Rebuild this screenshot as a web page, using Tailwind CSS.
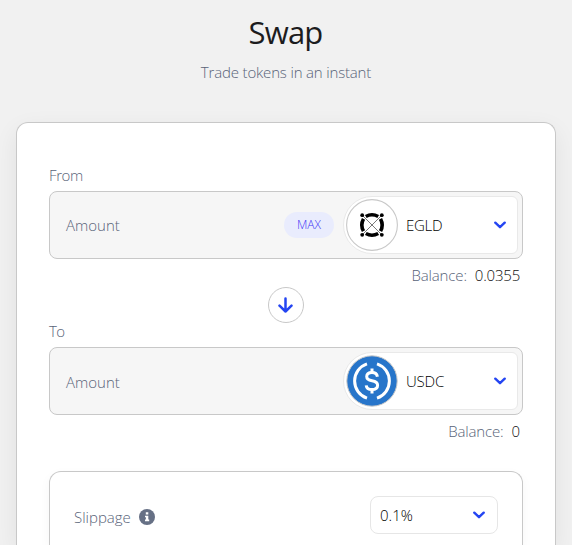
<!DOCTYPE html>
<html lang="en">
<head>
<meta charset="utf-8">
<title>Swap</title>
<script src="https://cdn.jsdelivr.net/npm/@tailwindcss/browser@4"></script>
</head>
<body>
<div class="h-[545px] overflow-hidden bg-[#f1f1f1] font-['Open_Sans','Noto_Sans',sans-serif] font-light text-[15px] leading-5 text-[#586378]">
<header class="flex h-[122px] flex-col items-center pt-3">
  <h1 class="pr-px text-[31px] leading-10 font-normal tracking-[-0.8px] text-[#1c1c1e]">Swap</h1>
  <p class="mt-2.5 tracking-[-0.17px]">Trade tokens in an instant</p>
</header>
<main class="mx-4 h-[423px] rounded-t-xl border border-b-0 border-[#c8c8c8] bg-white px-8 pt-[42px] shadow-[0_8px_24px_rgba(0,0,0,0.07)]">
  <div class="w-[474px]">
    <label class="block h-[26px] tracking-[-0.4px]">From</label>
    <div class="flex h-[68px] items-center rounded-lg border border-[#c8c8c8] bg-[#f6f6f6] pl-4 pr-1">
      <span class="flex-1 tracking-[0]">Amount</span>
      <button class="mr-[9px] h-[26px] w-[50px] rounded-full bg-[#e9ecfd] text-xs text-[#3f35f5]">MAX</button>
      <div class="flex h-[58px] w-[175px] items-center rounded-l-[29px] rounded-r-[6px] border border-[#e9e9e9] bg-white pl-0.5 pr-[11px] text-black">
        <svg class="size-[52px] shrink-0" viewBox="0 0 52 52" fill="none">
          <circle cx="26" cy="26" r="25.4" fill="#fff" stroke="#c8c8c8" stroke-width="1.1"/>
          <path d="M16 16 36 36M36 16 16 36" stroke="#555" stroke-width=".8"/>
          <g stroke="#000" stroke-width="3.6">
            <path d="M19.8 17.5Q26 14.1 32.2 17.5M34.5 19.8Q37.9 26 34.5 32.2M32.2 34.5Q26 37.9 19.8 34.5M17.5 32.2Q14.1 26 17.5 19.8"/>
          </g>
          <g fill="#000"><circle cx="16.2" cy="16.2" r="1.9"/><circle cx="35.8" cy="16.2" r="1.9"/><circle cx="16.2" cy="35.8" r="1.9"/><circle cx="35.8" cy="35.8" r="1.9"/></g>
        </svg>
        <span class="ml-2 flex-1 tracking-[-0.3px]">EGLD</span>
        <svg class="h-2 w-3" viewBox="0 0 12 8" fill="none" stroke="#2445f2" stroke-width="2.4" stroke-linecap="round" stroke-linejoin="round"><path d="m1.3 1.7 4.7 4.5 4.7-4.5"/></svg>
      </div>
    </div>
    <div class="mt-1.5 flex h-5 justify-end gap-2 pr-[3px]"><span class="tracking-[-0.15px]">Balance:</span><span class="tracking-[-0.2px] text-[#111]">0.0355</span></div>
    <div class="mt-0.5 flex h-9 justify-center">
      <button class="flex size-9 items-center justify-center rounded-full border border-[#c8c8c8] bg-white">
        <svg class="size-4" viewBox="0 0 16 16" fill="none" stroke="#2445f2" stroke-width="2.5" stroke-linecap="round" stroke-linejoin="round"><path d="M7.5 1.5v13M1.5 8.7l6 5.8 6-5.8"/></svg>
      </button>
    </div>
    <label class="-mt-0.5 block h-[26px] tracking-[-0.6px]">To</label>
    <div class="flex h-[68px] items-center rounded-lg border border-[#c8c8c8] bg-[#f6f6f6] pl-4 pr-1">
      <span class="flex-1 pt-0.5 tracking-[0]">Amount</span>
      <div class="flex h-[58px] w-[175px] items-center rounded-l-[29px] rounded-r-[6px] border border-[#e9e9e9] bg-white pl-0.5 pr-[11px] text-black">
        <svg class="size-[52px] shrink-0" viewBox="0 0 52 52" fill="none">
          <circle cx="26" cy="26" r="25.2" fill="#2775ca" stroke="#c8c8c8"/>
          <g stroke="#fff" stroke-width="3">
            <path d="M21 8.9a18 18 0 0 0 0 34.2M31 8.9a18 18 0 0 1 0 34.2"/>
            <path d="M26 13.5v4M26 34.5v4"/>
            <path d="M31.4 21.7c-.4-2.8-2.2-4.2-5.4-4.2-3.3 0-5.3 1.6-5.3 4.1 0 2.8 2.2 3.7 5.3 4.2 3.5.6 5.6 1.6 5.6 4.5 0 2.7-2.2 4.3-5.6 4.3s-5.5-1.5-5.8-4.3"/>
          </g>
        </svg>
        <span class="ml-2 flex-1 tracking-[-0.2px]">USDC</span>
        <svg class="h-2 w-3" viewBox="0 0 12 8" fill="none" stroke="#2445f2" stroke-width="2.4" stroke-linecap="round" stroke-linejoin="round"><path d="m1.3 1.7 4.7 4.5 4.7-4.5"/></svg>
      </div>
    </div>
    <div class="mt-1.5 flex h-5 justify-end gap-2 pr-[3px]"><span class="tracking-[-0.15px]">Balance:</span><span class="text-[#111]">0</span></div>
    <section class="mt-[30px] flex h-[74px] items-start rounded-t-xl border border-b-0 border-[#c8c8c8] px-6 pt-6 shadow-[0_4px_12px_rgba(0,0,0,0.04)]">
      <div class="flex h-[42px] flex-1 items-center gap-2">
        <span class="tracking-[0]">Slippage</span>
        <svg class="size-4" viewBox="0 0 16 16"><circle cx="8" cy="8" r="8" fill="#667085"/><path fill="#fff" d="M6.8 3.3h2.5v2.2H6.8zM6 6.7h3.3v3.9h.9v1.6H6v-1.6h.9V8.2H6z"/></svg>
      </div>
      <button class="flex h-[38px] w-32 items-center justify-between rounded-lg border border-[#e6e6e6] bg-white pl-[9px] pr-3 text-black">
        <span class="tracking-[0]">0.1%</span>
        <svg class="h-2 w-3" viewBox="0 0 12 8" fill="none" stroke="#2445f2" stroke-width="2.4" stroke-linecap="round" stroke-linejoin="round"><path d="m1.3 1.7 4.7 4.5 4.7-4.5"/></svg>
      </button>
    </section>
  </div>
</main>
</div>
</body>
</html>
